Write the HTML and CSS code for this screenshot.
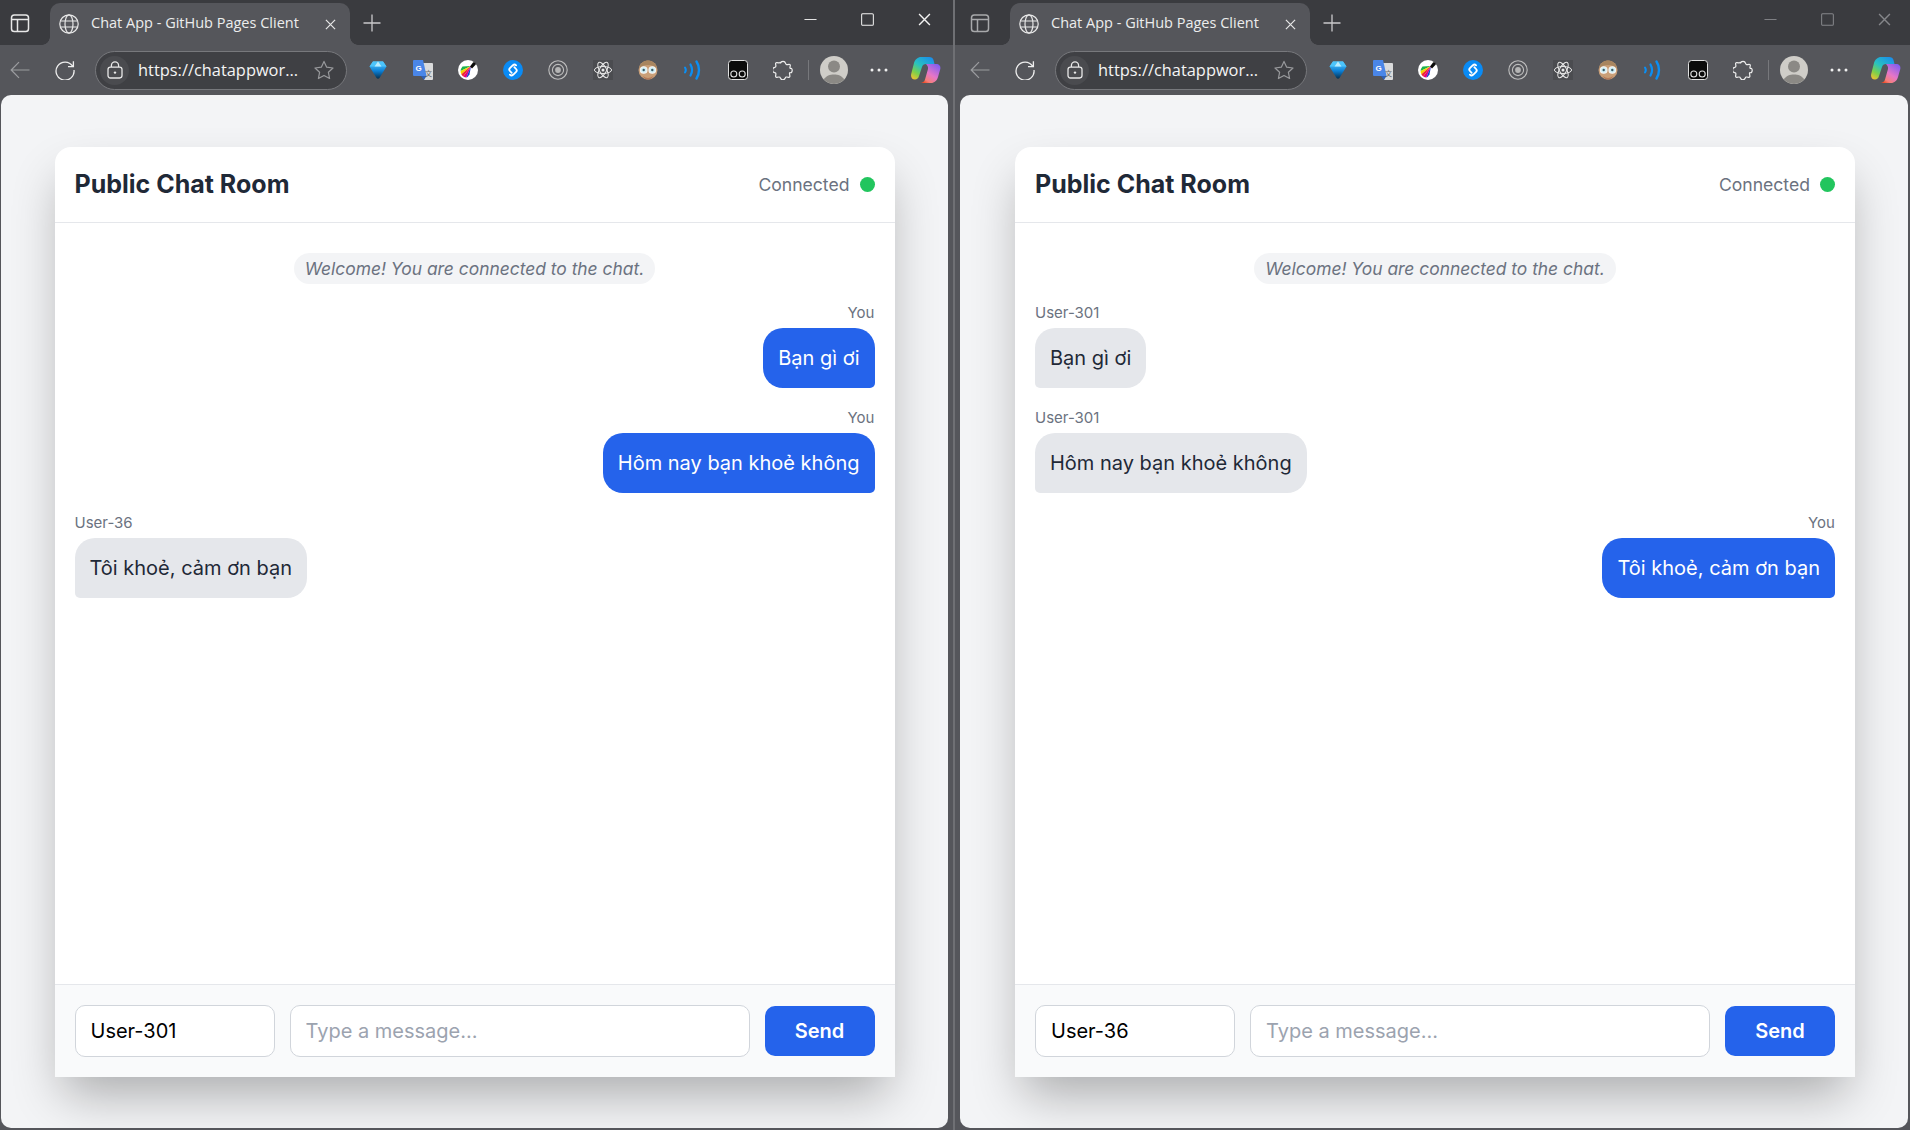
FILE: index.html
```html
<!DOCTYPE html>
<html>
<head>
	<title>Chat App - GitHub Pages Client</title>
	<link rel="stylesheet" href="styles.css">
</head>
<body>
	<svg class="icon-defs" width="0" height="0">
		<defs>
			<linearGradient id="gemGrad" x1="0" y1="0" x2="0" y2="1"><stop offset="0" stop-color="#5fd0ff"/><stop offset="0.55" stop-color="#0b7fd6"/><stop offset="1" stop-color="#06304f"/></linearGradient>
			<linearGradient id="copA" x1="0.8" y1="0" x2="0.1" y2="1"><stop offset="0" stop-color="#1b8fea"/><stop offset="0.45" stop-color="#28c3c0"/><stop offset="0.75" stop-color="#7ed04a"/><stop offset="1" stop-color="#f2c230"/></linearGradient>
			<linearGradient id="copB" x1="0.9" y1="0" x2="0.2" y2="1"><stop offset="0" stop-color="#7a5cf2"/><stop offset="0.55" stop-color="#e676c8"/><stop offset="0.85" stop-color="#f6807a"/><stop offset="1" stop-color="#ef4a24"/></linearGradient>
		</defs>
		<symbol id="i-sidebar" viewBox="0 0 20 20"><g fill="none" stroke="currentColor" stroke-width="1.5"><rect x="1.500" y="2" width="17" height="16.500" rx="2.800"/><path d="M2 6.500h16M7.500 6.500v11.500"/></g></symbol>
		<symbol id="i-globe" viewBox="0 0 20 20"><g fill="none" stroke="currentColor" stroke-width="1.2"><circle cx="10" cy="10" r="9.200"/><ellipse cx="10" cy="10" rx="4" ry="9.200"/><path d="M1.600 7h16.800M1.600 13h16.800"/></g></symbol>
		<symbol id="i-x" viewBox="0 0 12 12"><path d="M1 1l10 10M11 1L1 11" fill="none" stroke="currentColor" stroke-width="1.300"/></symbol>
		<symbol id="i-plus" viewBox="0 0 18 18"><path d="M9 .5v17M.5 9h17" fill="none" stroke="currentColor" stroke-width="1.300"/></symbol>
		<symbol id="i-min" viewBox="0 0 14 14"><path d="M.5 7h13" fill="none" stroke="currentColor" stroke-width="1"/></symbol>
		<symbol id="i-max" viewBox="0 0 14 14"><rect x=".7" y=".7" width="12.600" height="12.600" rx="1.200" fill="none" stroke="currentColor" stroke-width="1.100"/></symbol>
		<symbol id="i-back" viewBox="0 0 20 20"><path d="M19.500 10H1.200M9 2.200L1.200 10 9 17.800" fill="none" stroke="currentColor" stroke-width="1.200"/></symbol>
		<symbol id="i-reload" viewBox="0 0 20 20"><path d="M17.600 6.200A9 9 0 1 0 19 10M18.400 1.200v5.400h-5.400" fill="none" stroke="currentColor" stroke-width="1.300"/></symbol>
		<symbol id="i-lock" viewBox="0 0 16 18"><g fill="none" stroke="currentColor" stroke-width="1.300"><rect x="1" y="6.200" width="14" height="10.800" rx="2.400"/><path d="M4.400 6V4.400a3.600 3.600 0 0 1 7.200 0V6"/></g><circle cx="8" cy="11.600" r="1.200" fill="currentColor"/></symbol>
		<symbol id="i-star" viewBox="0 0 20 20"><path d="M10 1.400l2.700 5.800 6.300.8-4.600 4.300 1.200 6.200L10 15.400l-5.600 3.100 1.200-6.200L1 8l6.300-.8z" fill="none" stroke="currentColor" stroke-width="1.200" stroke-linejoin="round"/></symbol>
		<symbol id="i-gem" viewBox="0 0 20 20"><path d="M5 1.500h10l3.500 5-7 11.500c-.8 1-2.200 1-3 0l-7-11.500z" fill="url(#gemGrad)"/><path d="M5 1.500h10l3.500 5h-17z" fill="#4cc4fb"/><path d="M6.500 6.500L10 1.500l3.500 5z" fill="#b9ecff"/></symbol>
		<symbol id="i-brush" viewBox="0 0 20 20"><circle cx="10" cy="10" r="10" fill="#fff"/><path d="M13 6L4.500 6.500Q2.800 8.500 2.600 11z" fill="#1bb34a"/><path d="M13 6L2.600 11Q2.600 13 3.300 14.300z" fill="#f7d100"/><path d="M13 6L3.300 14.300Q4 15.800 5.300 16.600z" fill="#ef2b2b"/><path d="M13 6L5.300 16.600Q6.800 17.500 8.300 17.500z" fill="#e6007e"/><path d="M13 6L8.300 17.500Q10 17 11.500 14.500z" fill="#1a3fd0"/><path d="M12 6.500l3-4c1.200-1.200 3.600.8 2.600 2.200L14 8.500z" fill="#0b0b0b"/></symbol>
		<symbol id="i-shazam" viewBox="0 0 20 20"><circle cx="10" cy="10" r="10" fill="#0a8bf5"/><path d="M8.700 12.900L6.900 11a2 2 0 0 1 0-2.800l3-3a2.300 2.300 0 0 1 3.200.2M11.300 7.100l1.800 1.900a2 2 0 0 1 0 2.800l-3 3a2.300 2.300 0 0 1-3.200-.2" fill="none" stroke="#fff" stroke-width="1.800" stroke-linecap="round"/></symbol>
		<symbol id="i-target" viewBox="0 0 20 20"><g fill="none" stroke="#bdbdbd"><circle cx="10" cy="10" r="9.200" stroke-width="1.100"/><circle cx="10" cy="10" r="5.600" stroke-width="1.100"/></g><circle cx="10" cy="10" r="2.900" fill="#b5b5b5"/></symbol>
		<symbol id="i-atom" viewBox="0 0 20 20"><rect width="20" height="20" fill="#4b4c50"/><g fill="none" stroke="#e8e8e8" stroke-width="1"><ellipse cx="10" cy="10" rx="8.600" ry="3.500"/><ellipse cx="10" cy="10" rx="8.600" ry="3.500" transform="rotate(60 10 10)"/><ellipse cx="10" cy="10" rx="8.600" ry="3.500" transform="rotate(120 10 10)"/></g><circle cx="10" cy="10" r="1.500" fill="#e8e8e8"/></symbol>
		<symbol id="i-face" viewBox="0 0 20 20"><circle cx="10" cy="10" r="9.500" fill="#c99f78"/><path d="M1.200 8.500C2 3 6 .5 10 .5s8 2.500 8.800 8c-3-3-5.300-3.500-8.800-3.500s-5.800.5-8.800 3.500z" fill="#a8855f"/><path d="M5 16c3 2.500 7 2.500 10 0-1 3-3 3.500-5 3.500S6 19 5 16z" fill="#b47b5a"/><circle cx="5.700" cy="10" r="3.300" fill="#cfeef5" stroke="#f4f4f4" stroke-width="1.100"/><circle cx="14.300" cy="10" r="3.300" fill="#cfeef5" stroke="#f4f4f4" stroke-width="1.100"/><circle cx="5.700" cy="10" r="1.200" fill="#3b5a66"/><circle cx="14.300" cy="10" r="1.200" fill="#3b5a66"/></symbol>
		<symbol id="i-waves" viewBox="0 0 20 20"><g fill="none" stroke="#0a8ff5" stroke-linecap="round"><path d="M2 7.500c1 1.500 1 3.500 0 5" stroke-width="2"/><path d="M7.500 4.500c2 3.500 2 7.500 0 11" stroke-width="2.200"/><path d="M13.500 1.500c3.300 5 3.300 12 0 17" stroke-width="2.400"/></g></symbol>
		<symbol id="i-mask" viewBox="0 0 20 20"><rect x=".5" y=".5" width="19" height="19" rx="3" fill="#0b0b0b" stroke="#e0e0e0"/><g fill="none" stroke="#e0e0e0" stroke-width="1.100"><circle cx="5.800" cy="14" r="3"/><circle cx="14.200" cy="14" r="3"/></g></symbol>
		<symbol id="i-puzzle" viewBox="0 0 20 20"><path d="M7.400 3.400a2.700 2.700 0 0 1 5.200 0c.2 1 1 1.400 2 1.200l1.500-.3c.7-.1 1.300.5 1.200 1.200l-.4 2.100c-.1.700.4 1 1 .8.900-.2 1.300 1 1.300 1.800s-.4 2.800-1.800 2.500c-.6-.2-1 .1-.9.700l.4 2.700c.1.700-.5 1.300-1.200 1.200l-2-.3c-.8-.1-1.300.2-1.500 1a2.500 2.500 0 0 1-4.800 0c-.2-.8-.8-1.100-1.600-1l-2 .3c-.7.100-1.300-.5-1.200-1.200l.3-2c.1-.8-.4-1.400-1.200-1.500a2.700 2.700 0 0 1 0-5.300c.8-.2 1.300-.7 1.200-1.500l-.3-2c-.1-.7.500-1.300 1.200-1.200l2 .3c.8.100 1.400-.3 1.600-1z" fill="none" stroke="currentColor" stroke-width="1.200"/></symbol>
		<symbol id="i-avatar" viewBox="0 0 28 28"><circle cx="14" cy="14" r="14" fill="#cfcdc8"/><circle cx="14" cy="10.500" r="6" fill="#8b8985"/><path d="M3.800 23.500C6 19.800 10 18.500 14 18.500s8 1.300 10.200 5A14 14 0 0 1 3.800 23.500z" fill="#8b8985"/></symbol>
		<symbol id="i-dots" viewBox="0 0 18 4"><g fill="#f0f0f0"><circle cx="2" cy="2" r="1.500"/><circle cx="9" cy="2" r="1.500"/><circle cx="16" cy="2" r="1.500"/></g></symbol>
		<symbol id="i-copilot" viewBox="0 0 30 26"><path d="M15 7h10c3 0 5 2 4.300 5L27 20c-1 3.500-3.500 6-7 6H9c2.500 0 4.500-1.500 5-3.500L17 12c.3-2-.5-3.500-2-5z" fill="url(#copB)"/><path d="M13 0h5c2.500 0 4 1 4.500 3l1 4H15c-2 0-3.500 1-4 3L8 19c-.5 2-2 3.500-4 3.500-3 0-4.500-2.500-3.800-5.500L3 6c1-3.500 4-6 7-6z" fill="url(#copA)"/></symbol>
	</svg>

	<div class="screen">
		<div class="window window-first">
			<div class="tabstrip">
				<svg class="sidebar-btn"><use href="#i-sidebar"/></svg>
				<div class="tab">
					<svg class="tab-globe"><use href="#i-globe"/></svg>
					<span class="tab-title">Chat App - GitHub Pages Client</span>
					<svg class="tab-close"><use href="#i-x"/></svg>
				</div>
				<svg class="tab-new"><use href="#i-plus"/></svg>
				<div class="controls">
					<svg class="ctl"><use href="#i-min"/></svg>
					<svg class="ctl"><use href="#i-max"/></svg>
					<svg class="ctl"><use href="#i-x"/></svg>
				</div>
			</div>
			<div class="toolbar">
				<svg class="nav nav-back"><use href="#i-back"/></svg>
				<svg class="nav"><use href="#i-reload"/></svg>
				<div class="omnibox">
					<span class="lock-wrap"><svg class="lock"><use href="#i-lock"/></svg></span>
					<span class="url">https://chatappwor...</span>
					<svg class="star"><use href="#i-star"/></svg>
				</div>
				<div class="exts">
					<svg class="ext"><use href="#i-gem"/></svg>
					<svg class="ext" viewBox="0 0 20 20"><path d="M9 3h10a1 1 0 0 1 1 1v15a1 1 0 0 1-1 1h-8z" fill="#d9dadb"/><path d="M1 0h9l3.600 16H1a1 1 0 0 1-1-1V1a1 1 0 0 1 1-1z" fill="#4a86e8"/><path d="M8 16l3 4 2.400-4z" fill="#2f5fb5"/><text x="5.500" y="11" class="mini-g">G</text><text x="12" y="16" class="mini-han">文</text></svg>
					<svg class="ext"><use href="#i-brush"/></svg>
					<svg class="ext"><use href="#i-shazam"/></svg>
					<svg class="ext"><use href="#i-target"/></svg>
					<svg class="ext"><use href="#i-atom"/></svg>
					<svg class="ext"><use href="#i-face"/></svg>
					<svg class="ext"><use href="#i-waves"/></svg>
					<svg class="ext"><use href="#i-mask"/></svg>
					<svg class="ext ext-puzzle"><use href="#i-puzzle"/></svg>
				</div>
				<div class="tool-sep"></div>
				<svg class="avatar"><use href="#i-avatar"/></svg>
				<svg class="dots"><use href="#i-dots"/></svg>
				<svg class="copilot"><use href="#i-copilot"/></svg>
			</div>
			<div class="viewport">
				<div class="chat">
					<div class="chat-header">
						<h1 class="chat-title">Public Chat Room</h1>
						<div class="status"><span>Connected</span><span class="status-dot"></span></div>
					</div>
					<div class="chat-body">
						<div class="system-row"><span class="system-msg">Welcome! You are connected to the chat.</span></div>
						<div class="msg msg-own">
							<div class="msg-user">You</div>
							<div class="bubble">Bạn gì ơi</div>
						</div>
						<div class="msg msg-own">
							<div class="msg-user">You</div>
							<div class="bubble">Hôm nay bạn khoẻ không</div>
						</div>
						<div class="msg">
							<div class="msg-user">User-36</div>
							<div class="bubble">Tôi khoẻ, cảm ơn bạn</div>
						</div>
					</div>
					<div class="chat-footer">
						<input class="field field-name" value="User-301">
						<input class="field field-text" placeholder="Type a message...">
						<button class="send">Send</button>
					</div>
				</div>
			</div>
		</div>

		<div class="window window-second">
			<div class="tabstrip">
				<svg class="sidebar-btn"><use href="#i-sidebar"/></svg>
				<div class="tab">
					<svg class="tab-globe"><use href="#i-globe"/></svg>
					<span class="tab-title">Chat App - GitHub Pages Client</span>
					<svg class="tab-close"><use href="#i-x"/></svg>
				</div>
				<svg class="tab-new"><use href="#i-plus"/></svg>
				<div class="controls">
					<svg class="ctl"><use href="#i-min"/></svg>
					<svg class="ctl"><use href="#i-max"/></svg>
					<svg class="ctl"><use href="#i-x"/></svg>
				</div>
			</div>
			<div class="toolbar">
				<svg class="nav nav-back"><use href="#i-back"/></svg>
				<svg class="nav"><use href="#i-reload"/></svg>
				<div class="omnibox">
					<span class="lock-wrap"><svg class="lock"><use href="#i-lock"/></svg></span>
					<span class="url">https://chatappwor...</span>
					<svg class="star"><use href="#i-star"/></svg>
				</div>
				<div class="exts">
					<svg class="ext"><use href="#i-gem"/></svg>
					<svg class="ext" viewBox="0 0 20 20"><path d="M9 3h10a1 1 0 0 1 1 1v15a1 1 0 0 1-1 1h-8z" fill="#d9dadb"/><path d="M1 0h9l3.600 16H1a1 1 0 0 1-1-1V1a1 1 0 0 1 1-1z" fill="#4a86e8"/><path d="M8 16l3 4 2.400-4z" fill="#2f5fb5"/><text x="5.500" y="11" class="mini-g">G</text><text x="12" y="16" class="mini-han">文</text></svg>
					<svg class="ext"><use href="#i-brush"/></svg>
					<svg class="ext"><use href="#i-shazam"/></svg>
					<svg class="ext"><use href="#i-target"/></svg>
					<svg class="ext"><use href="#i-atom"/></svg>
					<svg class="ext"><use href="#i-face"/></svg>
					<svg class="ext"><use href="#i-waves"/></svg>
					<svg class="ext"><use href="#i-mask"/></svg>
					<svg class="ext ext-puzzle"><use href="#i-puzzle"/></svg>
				</div>
				<div class="tool-sep"></div>
				<svg class="avatar"><use href="#i-avatar"/></svg>
				<svg class="dots"><use href="#i-dots"/></svg>
				<svg class="copilot"><use href="#i-copilot"/></svg>
			</div>
			<div class="viewport">
				<div class="chat">
					<div class="chat-header">
						<h1 class="chat-title">Public Chat Room</h1>
						<div class="status"><span>Connected</span><span class="status-dot"></span></div>
					</div>
					<div class="chat-body">
						<div class="system-row"><span class="system-msg">Welcome! You are connected to the chat.</span></div>
						<div class="msg">
							<div class="msg-user">User-301</div>
							<div class="bubble">Bạn gì ơi</div>
						</div>
						<div class="msg">
							<div class="msg-user">User-301</div>
							<div class="bubble">Hôm nay bạn khoẻ không</div>
						</div>
						<div class="msg msg-own">
							<div class="msg-user">You</div>
							<div class="bubble">Tôi khoẻ, cảm ơn bạn</div>
						</div>
					</div>
					<div class="chat-footer">
						<input class="field field-name" value="User-36">
						<input class="field field-text" placeholder="Type a message...">
						<button class="send">Send</button>
					</div>
				</div>
			</div>
		</div>
	</div>
</body>
</html>
```
FILE: styles.css
```css
* {
	box-sizing: border-box;
}
html, body {
	margin: 0;
	height: 100%;
	overflow: hidden;
}
body {
	font-family: Inter, "Liberation Sans", sans-serif;
	background: #4a4b50;
}
svg {
	display: block;
	flex: none;
}
.icon-defs {
	position: absolute;
}
.mini-g {
	font: 700 8px "Liberation Sans", sans-serif;
	fill: #fff;
	text-anchor: middle;
}
.mini-han {
	font: 7px "Noto Sans CJK SC", sans-serif;
	fill: #666;
}

.screen {
	display: flex;
	height: 1130px;
}
.window {
	display: flex;
	flex-direction: column;
	height: 1130px;
	background: #55565b;
}
.window-first {
	width: 953px;
}
.window-second {
	width: 955px;
	margin-left: 2px;
	padding-left: 5px;
	box-shadow: -2px 0 0 0 #6f7074;
}
.window-first .viewport {
	margin-left: 1px;
	margin-right: 5px;
}
.window-second .viewport {
	margin-right: 2px;
	padding-left: 2px;
}

/* browser chrome */
.tabstrip {
	display: flex;
	align-items: flex-start;
	height: 45px;
	background: #3a3b3f;
	color: #e8e8e8;
}
.window-second .tabstrip {
	margin-left: -5px;
	padding-left: 5px;
}
.sidebar-btn {
	width: 20px;
	height: 20px;
	margin: 13px 0 0 10px;
}
.tab {
	display: flex;
	align-items: center;
	position: relative;
	width: 300px;
	height: 42px;
	margin: 3px 0 0 20px;
	padding: 0 14px 0 9px;
	background: #55565b;
	border-radius: 10px 10px 0 0;
}
.tab::before, .tab::after {
	content: "";
	position: absolute;
	bottom: 0;
	width: 8px;
	height: 8px;
}
.tab::before {
	left: -8px;
	background: radial-gradient(circle at 0 0, transparent 7.5px, #55565b 8px);
}
.tab::after {
	right: -8px;
	background: radial-gradient(circle at 100% 0, transparent 7.5px, #55565b 8px);
}
.tab-globe {
	width: 20px;
	height: 20px;
}
.tab-title {
	flex: 1;
	margin: -4px 0 0 12px;
	font: 14.5px "Open Sans", sans-serif;
	color: #eceded;
	white-space: nowrap;
}
.tab-close {
	width: 11px;
	height: 11px;
}
.tab-new {
	width: 18px;
	height: 18px;
	margin: 14px 0 0 13px;
	color: #c9c9cb;
}
.controls {
	display: flex;
	gap: 44px;
	margin: 13px 0 0 auto;
	padding-right: 22px;
}
.window-second .controls {
	padding-right: 19px;
}
.ctl {
	width: 13px;
	height: 13px;
	color: #f2f2f2;
}
.window-second .ctl {
	color: #85868a;
}
.window-second .sidebar-btn {
	color: #a8a9ab;
}

.toolbar {
	display: flex;
	align-items: center;
	height: 50px;
}
.nav {
	width: 20px;
	height: 20px;
	margin-left: 25px;
	color: #eeeeee;
}
.nav-back {
	margin-left: 10px;
	color: #9c9da0;
}
.omnibox {
	display: flex;
	align-items: center;
	width: 252px;
	height: 39px;
	margin-left: 20px;
	padding: 0 12px 0 4px;
	background: #3f4044;
	border: 1px solid #77787c;
	border-radius: 20px;
}
.lock-wrap {
	display: flex;
	align-items: center;
	justify-content: center;
	width: 29px;
	height: 29px;
	border-radius: 50%;
	background: #4a4b4f;
}
.lock {
	width: 16px;
	height: 18px;
	color: #e8e8e8;
}
.url {
	flex: 1;
	margin: -2px 0 0 9px;
	font: 16.4px "Open Sans", sans-serif;
	color: #f4f4f4;
	white-space: nowrap;
}
.star {
	width: 20px;
	height: 20px;
	color: #98999c;
}
.exts {
	display: flex;
	gap: 25px;
	margin-left: 21px;
}
.ext {
	width: 20px;
	height: 20px;
}
.ext-puzzle {
	color: #eeeeee;
}
.tool-sep {
	width: 1px;
	height: 20px;
	margin-left: 15px;
	background: #77787c;
}
.avatar {
	width: 28px;
	height: 28px;
	margin-left: 11px;
}
.dots {
	width: 18px;
	height: 4px;
	margin-left: 22px;
}
.copilot {
	width: 30px;
	height: 26px;
	margin-left: 23px;
}

.viewport {
	flex: 1;
	display: flex;
	justify-content: center;
	align-items: flex-start;
	height: 1033px;
	margin-bottom: 2px;
	padding-top: 52px;
	background: #f3f4f6;
	border-radius: 10px;
	overflow: hidden;
}

/* chat app */
.chat {
	display: flex;
	flex-direction: column;
	flex: none;
	width: 840px;
	height: 930px;
	background: #fff;
	border-radius: 16px 16px 0 0;
	box-shadow: 0 25px 50px -8px rgba(0, 0, 0, .3);
}
.chat-header {
	display: flex;
	justify-content: space-between;
	align-items: center;
	height: 76px;
	padding: 0 20px 1px;
	border-bottom: 1px solid #e5e7eb;
}
.chat-title {
	margin: 0;
	font-size: 25px;
	font-weight: 700;
	color: #1f2937;
}
.status {
	display: flex;
	align-items: center;
	gap: 10px;
	font-size: 17.6px;
	color: #6b7280;
}
.status-dot {
	width: 15px;
	height: 15px;
	border-radius: 50%;
	background: #22c55e;
}
.chat-body {
	flex: 1;
	padding: 30px 20px 0;
}
.system-row {
	display: flex;
	justify-content: center;
	margin-bottom: 19px;
}
.system-msg {
	padding: 3px 11px;
	font-size: 17.4px;
	font-style: italic;
	line-height: 25px;
	color: #6b7280;
	background: #f3f4f6;
	border-radius: 16px;
}
.msg {
	display: flex;
	flex-direction: column;
	align-items: flex-start;
	margin-bottom: 20px;
}
.msg-own {
	align-items: flex-end;
}
.msg-user {
	margin-bottom: 5px;
	font-size: 15px;
	line-height: 20px;
	color: #6b7280;
}
.bubble {
	padding: 15px;
	font-size: 20px;
	line-height: 30px;
	color: #1f2937;
	background: #e5e7eb;
	border-radius: 20px 20px 20px 5px;
}
.msg-own .bubble {
	color: #fff;
	background: #2563eb;
	border-radius: 20px 20px 5px 20px;
}
.chat-footer {
	display: flex;
	align-items: center;
	gap: 15px;
	height: 93px;
	padding: 0 20px;
	background: #f9fafb;
	border-top: 1px solid #e5e7eb;
}
.field {
	height: 52px;
	padding: 0 15px;
	font: 20px Inter, sans-serif;
	color: #000;
	background: #fff;
	border: 1px solid #d1d5db;
	border-radius: 10px;
}
.field::placeholder {
	color: #9ca3af;
}
.field-name {
	width: 200px;
}
.field-text {
	flex: 1;
	min-width: 0;
}
.send {
	width: 110px;
	height: 50px;
	font: 600 20px Inter, sans-serif;
	color: #fff;
	background: #2563eb;
	border: 0;
	border-radius: 10px;
}
```
